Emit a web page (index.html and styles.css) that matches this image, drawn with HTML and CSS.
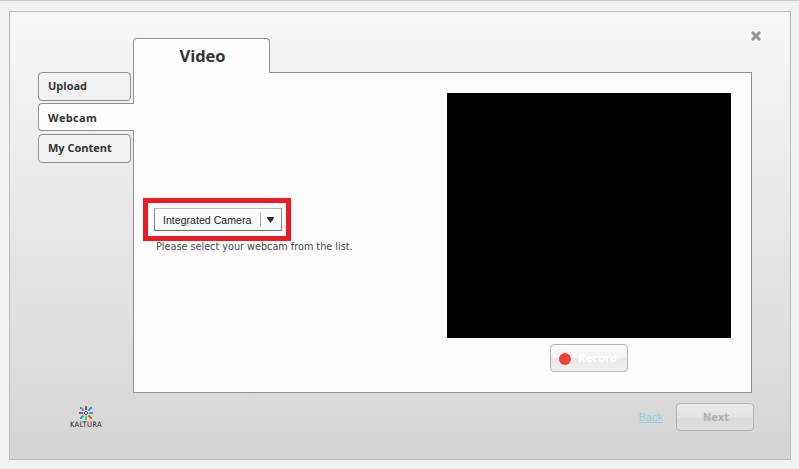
FILE: index.html
```html
<!DOCTYPE html>
<html lang="en">
<head>
<meta charset="utf-8">
<title>Video</title>
<link rel="stylesheet" href="styles.css">
</head>
<body>
<div class="dialog">
  <button class="close" aria-label="Close">
    <svg width="10" height="10" viewBox="0 0 10 10"><path d="M2 2L8 8M8 2L2 8" stroke="#929292" stroke-width="3" stroke-linecap="square"/></svg>
  </button>
  <div class="main">
    <nav class="side">
      <a class="side-tab">Upload</a>
      <a class="side-tab active">Webcam</a>
      <a class="side-tab">My Content</a>
    </nav>
    <section class="content">
      <h1 class="tab">Video</h1>
      <div class="panel">
        <div class="source">
          <div class="highlight">
            <div class="select">
              <span class="select-text">Integrated Camera</span>
              <span class="select-arrow"><svg width="7" height="6" viewBox="0 0 7 6"><path d="M0 0H7V1L4.1 5.5H2.9L0 1Z" fill="#2d3134"/></svg></span>
            </div>
          </div>
          <p class="hint">Please select your webcam from the list.</p>
        </div>
        <div class="capture">
          <div class="video"></div>
          <button class="btn record"><i class="dot"></i><span>Record</span></button>
        </div>
      </div>
    </section>
  </div>
  <footer class="footer">
    <div class="logo">
      <svg width="14" height="14" viewBox="0 0 14 14" shape-rendering="crispEdges">
        <path d="M6 0h2v4H6z" fill="#fb1e46"/>
        <path d="M6 10h2v4H6z" fill="#72d04c"/>
        <path d="M0 6h4v2H0z" fill="#ff1c92"/>
        <path d="M10 6h4v2h-4z" fill="#2bb3a0"/>
        <path d="M1 1h2v1h1v1h1v2H3V4H2V3H1z" fill="#2bb39c"/>
        <path d="M13 1h-2v1h-1v1H9v2h2V4h1V3h1z" fill="#25a5f5"/>
        <path d="M1 13h2v-1h1v-1h1V9H3v1H2v1H1z" fill="#25a5f5"/>
        <path d="M13 13h-2v-1h-1v-1H9V9h2v1h1v1h1z" fill="#ff6a10"/>
        <path d="M6 5h2v1h1v2H8v1H6V8H5V6h1zM6 6v2h2V6z" fill="#145f9e" fill-rule="evenodd"/>
      </svg>
      <span class="brand">KALTURA</span>
    </div>
    <div class="actions">
      <a class="back">Back</a>
      <button class="btn next"><span>Next</span></button>
    </div>
  </footer>
</div>
</body>
</html>
```
FILE: styles.css
```css
* { box-sizing: border-box; }
body {
  margin: 0;
  height: 469px;
  overflow: hidden;
  padding: 10px 8px 0 9px;
  background: #f1f1f1;
  border-top: 1px solid #cbcbcb;
  font-family: "DejaVu Sans Condensed", "DejaVu Sans", sans-serif;
  color: #333;
}
.dialog {
  position: relative;
  width: 782px;
  height: 449px;
  border: 1px solid #bcbcbc;
  background: linear-gradient(#f7f7f7, #d5d5d5);
  padding: 26px 0 0 28px;
}
.close {
  position: absolute;
  top: 19px;
  right: 29px;
  width: 10px;
  height: 10px;
  padding: 0;
  border: 0;
  background: none;
}
.close svg { display: block; }
.main { display: flex; }
.side {
  width: 95px;
  padding-top: 34px;
  display: flex;
  flex-direction: column;
  align-items: flex-start;
}
.side-tab {
  width: 93px;
  height: 29px;
  border: 1px solid #909090;
  border-radius: 4px;
  background: #f2f2f2;
  padding-left: 9px;
  font: bold 11px/26px "Open Sans", sans-serif;
  white-space: nowrap;
  margin-bottom: 3px;
}
.side-tab.active {
  position: relative;
  width: 96px;
  height: 28px;
  margin: -1px -1px 3px 0;
  border-right: 0;
  border-radius: 4px 0 0 4px;
  background: #fdfdfd;
  line-height: 28px;
  letter-spacing: 0.3px;
}
.content { width: 619px; }
.tab {
  position: relative;
  width: 137px;
  height: 35px;
  margin: 0 0 -1px;
  padding-left: 2px;
  border: 1px solid #909090;
  border-bottom: 0;
  border-radius: 4px 4px 0 0;
  background: #fdfdfd;
  text-align: center;
  font: bold 16.5px/34px "Open Sans", sans-serif;
}
.panel {
  display: flex;
  justify-content: space-between;
  height: 321px;
  border: 1px solid #909090;
  background: #fdfdfd;
  padding: 20px 20px 0 9px;
}
.source { padding-top: 105px; }
.highlight {
  width: 148px;
  height: 43px;
  border: 5px solid #ed1c24;
  padding: 5px 4px 5px 6px;
}
.select {
  display: flex;
  align-items: center;
  width: 128px;
  height: 23px;
  border: 1px solid;
  border-color: #b5b7b9 #85878a #6a6c6e #85878a;
  padding-left: 8px;
}
.select-text {
  width: 97px;
  font: 10.6px/21px "Liberation Sans", sans-serif;
  color: #111820;
  white-space: nowrap;
  padding-top: 1px;
}
.select-arrow {
  display: flex;
  align-items: center;
  height: 15px;
  border-left: 1px solid #aaa;
  padding-left: 6px;
}
.hint {
  margin: -1px 0 0 13px;
  font-size: 10.75px;
  line-height: 13px;
  white-space: nowrap;
  color: #444;
}
.capture {
  display: flex;
  flex-direction: column;
  align-items: center;
}
.video { width: 284px; height: 245px; background: #000; }
.btn {
  display: flex;
  align-items: center;
  justify-content: center;
  width: 78px;
  height: 28px;
  border: 1px solid #b5b5b5;
  border-radius: 4px;
  padding: 0;
  font: bold 11px "DejaVu Sans Condensed", sans-serif;
}
.record {
  margin: 6px 0 0;
  padding: 1px 2px 0 0;
  background: linear-gradient(#fafafa, #f2f2f2 50%, #e9e9e9 50%, #f0f0f0);
  color: #fff;
  gap: 7px;
}
.dot { width: 12px; height: 12px; border-radius: 50%; background: #f2423c; }
.footer { display: flex; justify-content: space-between; padding-right: 36px; }
.logo {
  display: flex;
  flex-direction: column;
  align-items: center;
  width: 34px;
  margin: 13px 0 0 31px;
}
.brand {
  font: 7.5px/9px "DejaVu Sans Condensed", sans-serif;
  letter-spacing: 0.35px;
  color: #222;
}
.actions { display: flex; padding-top: 10px; }
.back {
  margin-right: 13px;
  font: 11px/28px "Liberation Sans", sans-serif;
  color: #91cfe3;
  text-decoration: underline;
}
.next {
  padding: 1px 0 0 2px;
  background: linear-gradient(#ebebeb, #e1e1e1 55%, #d9d9d9 55%, #dfdfdf);
  color: #b0b0b0;
}
```
